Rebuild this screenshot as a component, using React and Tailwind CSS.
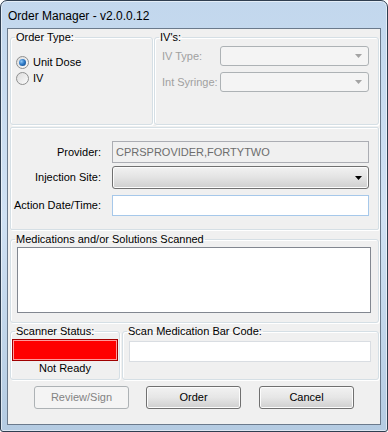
import React from "react";

const GroupBox = ({ title, className = "", children }) => (
  <fieldset
    className={`border border-[#d5dfe5] rounded-[3px] shadow-[inset_1px_1px_0_#fff,1px_1px_0_#fff] ${className}`}
  >
    <legend className="ml-[4px] px-[1px] leading-[13px]">{title}</legend>
    {children}
  </fieldset>
);

const Radio = ({ checked, label }) => (
  <label className="flex items-center h-[13px]">
    <span className="w-[13px] h-[13px] rounded-full border border-[#8e8f8f] bg-linear-to-br from-[#dcdcdc] to-[#fbfbfb] flex items-center justify-center">
      {checked && (
        <span className="w-[7px] h-[7px] rounded-full bg-[radial-gradient(circle_at_35%_35%,#8fc7f5_0%,#2f7bc8_45%,#0d3f7a_100%)]" />
      )}
    </span>
    <span className="ml-[4px]">{label}</span>
  </label>
);

const Arrow = ({ color }) => (
  <svg width="7" height="4" viewBox="0 0 7 4">
    <polygon points="0,0 7,0 3.5,4" fill={color} />
  </svg>
);

const Combo = ({ disabled, className = "" }) =>
  disabled ? (
    <div
      className={`border border-[#adb2b5] rounded-[3px] bg-[#f4f4f4] flex items-center justify-end pr-[6px] ${className}`}
    >
      <Arrow color="#a3a3a3" />
    </div>
  ) : (
    <div
      className={`border border-[#707070] rounded-[3px] bg-linear-to-b from-[#f2f2f2] via-[#e3e3e3] to-[#cfcfcf] shadow-[inset_0_0_0_1px_#fcfcfc] flex items-center justify-end pr-[6px] ${className}`}
    >
      <Arrow color="#000" />
    </div>
  );

const Button = ({ children, disabled }) => (
  <button
    type="button"
    className={
      disabled
        ? "w-[95px] h-[23px] rounded-[3px] border border-[#adb2b5] bg-[#f4f4f4] text-[#838383]"
        : "w-[95px] h-[23px] rounded-[3px] border border-[#707070] bg-linear-to-b from-[#f2f2f2] via-[#e6e6e6] to-[#cfcfcf] shadow-[inset_0_0_0_1px_#fcfcfc] text-black"
    }
  >
    {children}
  </button>
);

export default function App() {
  return (
    <div className="w-[388px] h-[432px] bg-white font-['Liberation_Sans',Arial,sans-serif]">
      <div className="h-full flex flex-col rounded-t-[7px] rounded-b-[3px] border border-[#2f3e50] bg-linear-to-b from-[#c2d7ed] via-[#d0e1f3] to-[#b4cbe2] shadow-[inset_0_0_0_1px_rgba(255,255,255,0.55)] px-[6px] pb-[6px]">
        {/* Title bar */}
        <div className="h-[27px] flex items-center pl-[1px] pt-[2px] text-[12px] text-black">
          Order Manager - v2.0.0.12
        </div>

        {/* Client area */}
        <div className="flex-1 border border-[#6b7a8c] bg-[#f0f0f0] text-[11px] leading-[13px] text-black">
          {/* Order type / IV's */}
          <div className="flex gap-[1px] mt-[2px] ml-[2px]">
            <GroupBox title="Order Type:" className="w-[143px] h-[94px]">
              <div className="pt-[12px] pl-[5px] flex flex-col gap-[3px]">
                <Radio checked label="Unit Dose" />
                <Radio label="IV" />
              </div>
            </GroupBox>
            <GroupBox title="IV's:" className="w-[225px] h-[94px]">
              <div className="pt-[2px] pl-[7px] flex flex-col gap-[6px] text-[#a0a0a0]">
                <div className="flex items-center">
                  <span className="w-[58px]">IV Type:</span>
                  <Combo disabled className="w-[149px] h-[20px]" />
                </div>
                <div className="flex items-center">
                  <span className="w-[58px]">Int Syringe:</span>
                  <Combo disabled className="w-[149px] h-[20px]" />
                </div>
              </div>
            </GroupBox>
          </div>

          {/* Provider panel */}
          <div className="mt-[2px] ml-[2px] w-[369px] h-[103px] border border-[#d5dfe5] rounded-[2px] shadow-[inset_1px_1px_0_#fff,1px_1px_0_#fff] pt-[13px]">
            <div className="flex items-center">
              <span className="w-[90px] text-right">Provider:</span>
              <div className="ml-[11px] w-[257px] h-[22px] border border-[#abadb3] bg-[#f0f0f0] flex items-center pl-[3px] text-[#6d6d6d]">
                CPRSPROVIDER,FORTYTWO
              </div>
            </div>
            <div className="flex items-center mt-[3px]">
              <span className="w-[90px] text-right">Injection Site:</span>
              <Combo className="ml-[11px] w-[257px] h-[23px]" />
            </div>
            <div className="flex items-center mt-[6px]">
              <span className="w-[90px] text-right">Action Date/Time:</span>
              <div className="ml-[11px] w-[257px] h-[21px] border border-[#a6c8ea] bg-white" />
            </div>
          </div>

          {/* Medications */}
          <GroupBox title="Medications and/or Solutions Scanned" className="mt-[3px] ml-[2px] w-[369px]">
            <div className="ml-[6px] mt-[1px] mb-[9px] w-[354px] h-[66px] border border-[#828790] bg-white" />
          </GroupBox>

          {/* Scanner row */}
          <div className="flex gap-[2px] mt-[2px] ml-[2px]">
            <GroupBox title="Scanner Status:" className="w-[110px] h-[55px]">
              <div className="ml-[1px] mt-[1px] w-[106px] h-[22px] border border-[#a00000] bg-[#ff0000] shadow-[inset_0_0_0_1px_#ff9a9a]" />
              <div className="text-center mt-[1px]">Not Ready</div>
            </GroupBox>
            <GroupBox title="Scan Medication Bar Code:" className="w-[257px] h-[55px]">
              <div className="ml-[6px] mt-[3px] w-[242px] h-[21px] border border-[#d9dde2] bg-white" />
            </GroupBox>
          </div>

          {/* Buttons */}
          <div className="flex mt-[6px] ml-[26px]">
            <Button disabled>Review/Sign</Button>
            <div className="ml-[17px]">
              <Button>Order</Button>
            </div>
            <div className="ml-[18px]">
              <Button>Cancel</Button>
            </div>
          </div>
        </div>
      </div>
    </div>
  );
}
